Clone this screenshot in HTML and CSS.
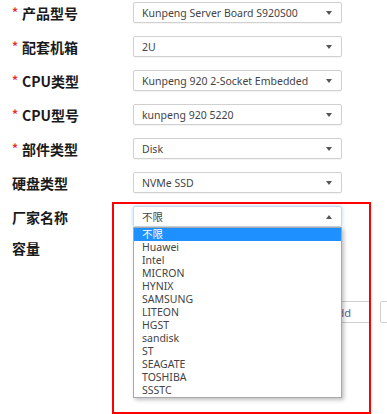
FILE: index.html
```html
<!DOCTYPE html>
<html lang="zh-CN">
<head>
    <meta charset="UTF-8">
    <meta name="viewport" content="width=device-width, initial-scale=1.0">
    <title>部件查询</title>
    <link rel="stylesheet" href="styles.css">
</head>
<body>
    <div class="form">
        <div class="row">
            <label class="label"><span class="req">*</span>产品型号</label>
            <div class="select"><span>Kunpeng Server Board S920S00</span><i class="arrow"></i></div>
        </div>
        <div class="row">
            <label class="label"><span class="req">*</span>配套机箱</label>
            <div class="select"><span>2U</span><i class="arrow"></i></div>
        </div>
        <div class="row">
            <label class="label"><span class="req">*</span>CPU类型</label>
            <div class="select"><span>Kunpeng 920 2-Socket Embedded</span><i class="arrow"></i></div>
        </div>
        <div class="row">
            <label class="label"><span class="req">*</span>CPU型号</label>
            <div class="select"><span>kunpeng 920 5220</span><i class="arrow"></i></div>
        </div>
        <div class="row">
            <label class="label"><span class="req">*</span>部件类型</label>
            <div class="select"><span>Disk</span><i class="arrow"></i></div>
        </div>
        <div class="row">
            <label class="label">硬盘类型</label>
            <div class="select"><span>NVMe SSD</span><i class="arrow"></i></div>
        </div>
        <div class="row">
            <label class="label">厂家名称</label>
            <div class="select open"><span>不限</span><i class="arrow up"></i>
                <ul class="options">
                    <li class="active">不限</li>
                    <li>Huawei</li>
                    <li>Intel</li>
                    <li>MICRON</li>
                    <li>HYNIX</li>
                    <li>SAMSUNG</li>
                    <li>LITEON</li>
                    <li>HGST</li>
                    <li>sandisk</li>
                    <li>ST</li>
                    <li>SEAGATE</li>
                    <li>TOSHIBA</li>
                    <li>SSSTC</li>
                </ul>
            </div>
        </div>
        <div class="row row-cap">
            <label class="label">容量</label>
        </div>
        <div class="actions">
            <button class="btn">Add</button>
            <button class="btn" aria-label="Reset"></button>
        </div>
    </div>
    <div class="mark"></div>
</body>
</html>
```

FILE: styles.css
```css
html, body {
    margin: 0;
    width: 387px;
    height: 414px;
    overflow: hidden;
    background: #fff;
}

body {
    position: relative;
    font-family: "Noto Sans", "Noto Sans CJK SC", sans-serif;
}

.form {
    padding-top: 2px;
}

.row {
    display: flex;
    align-items: center;
    height: 21px;
    margin-bottom: 13px;
}

.row-cap {
    margin-top: -3px;
}

.label {
    width: 121px;
    padding-left: 12px;
    font-family: "Noto Sans CJK SC", sans-serif;
    font-size: 14px;
    font-weight: bold;
    color: #1a1a1a;
}

.req {
    color: #e0332f;
    font-size: 12px;
    margin-right: 4px;
    position: relative;
    top: -2px;
}

.select {
    position: relative;
    width: 209px;
    height: 21px;
    box-sizing: border-box;
    border: 1px solid #d0d0d0;
    border-radius: 2px;
    padding: 0 8px;
    display: flex;
    align-items: center;
    justify-content: space-between;
    font-size: 10.5px;
    color: #444;
    box-shadow: 0 1px 1px rgba(0, 0, 0, 0.05);
}

.select.open {
    border-color: #c8d8e8;
    box-shadow: 0 0 4px rgba(102, 175, 233, 0.45);
}

.arrow {
    width: 0;
    height: 0;
    border-left: 3px solid transparent;
    border-right: 3px solid transparent;
    border-top: 4px solid #555;
    margin-right: 1px;
}

.arrow.up {
    border-top: 0;
    border-bottom: 4px solid #555;
}

.options {
    position: absolute;
    left: -1px;
    top: 20px;
    width: 209px;
    box-sizing: border-box;
    margin: 0;
    padding: 0;
    list-style: none;
    background: #fff;
    border: 1px solid #a8a8a8;
    box-shadow: 2px 2px 4px rgba(0, 0, 0, 0.25);
    z-index: 2;
}

.options li {
    height: 13px;
    line-height: 13px;
    padding-left: 8px;
    color: #444;
}

.options li.active {
    background: #1e90ff;
    color: #fff;
}

.actions {
    display: flex;
    gap: 9px;
    margin-top: 43px;
    padding-left: 312px;
}

.btn {
    flex: none;
    width: 59px;
    height: 22px;
    padding: 0 19px 0 0;
    text-align: right;
    border: 1px solid #d0d0d0;
    border-radius: 2px;
    background: #fff;
    font-family: "Noto Sans", sans-serif;
    font-size: 11px;
    color: #4b6b9a;
}

.mark {
    position: absolute;
    left: 112px;
    top: 202px;
    width: 255px;
    height: 208px;
    border: 2px solid #f00;
    z-index: 3;
}
```
